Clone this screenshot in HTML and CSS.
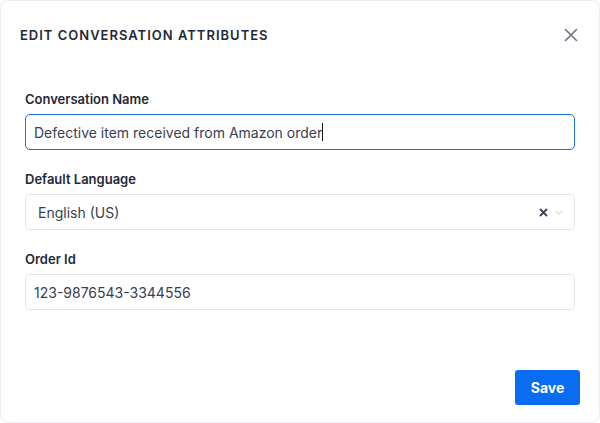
FILE: index.html
```html
<!DOCTYPE html>
<html>
<head>
<meta charset="utf-8">
<link rel="stylesheet" href="styles.css">
</head>
<body>
<div class="modal">
  <div class="header">
    <h2 class="title">EDIT CONVERSATION ATTRIBUTES</h2>
    <button class="close" aria-label="Close">
      <svg width="14" height="14" viewBox="0 0 14 14"><path d="M1.5 1.5 L12.5 12.5 M12.5 1.5 L1.5 12.5" stroke="#6b7280" stroke-width="1.6" stroke-linecap="round"/></svg>
    </button>
  </div>
  <div class="body">
    <div class="field">
      <label class="label">Conversation Name</label>
      <div class="input focused">Defective item received from Amazon order<span class="caret"></span></div>
    </div>
    <div class="field">
      <label class="label">Default Language</label>
      <div class="input select">
        <span class="select-value">English (US)</span>
        <span class="clear">
          <svg width="9" height="9" viewBox="0 0 9 9"><path d="M1.5 1.5 L7.5 7.5 M7.5 1.5 L1.5 7.5" stroke="#374151" stroke-width="1.8" stroke-linecap="round"/></svg>
        </span>
        <span class="chev">
          <svg width="8" height="5" viewBox="0 0 8 5"><path d="M1 1 L4 4 L7 1" stroke="#c4c8cf" stroke-width="1" fill="none"/></svg>
        </span>
      </div>
    </div>
    <div class="field">
      <label class="label">Order Id</label>
      <div class="input">123-9876543-3344556</div>
    </div>
  </div>
  <div class="footer">
    <button class="save">Save</button>
  </div>
</div>
</body>
</html>
```
FILE: styles.css
```css
* { box-sizing: border-box; }
html, body { margin: 0; padding: 0; background: #ffffff; }
body { font-family: Inter, "Noto Sans", sans-serif; color: #1f2937; }
.modal {
  width: 600px;
  height: 423px;
  background: #fff;
  border: 1px solid #eceef1;
  border-radius: 8px;
  display: flex;
  flex-direction: column;
}
.header {
  display: flex;
  align-items: center;
  justify-content: space-between;
  padding: 17px 21px 0 19px;
  height: 50px;
}
.title {
  margin: 0;
  font-size: 13px;
  font-weight: 600;
  letter-spacing: 1px;
  color: #1f2937;
}
.close {
  border: 0;
  background: none;
  padding: 0;
  width: 14px;
  height: 14px;
  display: flex;
}
.body {
  padding: 40px 24px 0 24px;
  display: flex;
  flex-direction: column;
  gap: 21px;
}
.field { display: flex; flex-direction: column; }
.label {
  font-size: 13px;
  font-weight: 600;
  color: #1f2937;
  line-height: 16px;
  margin-bottom: 7px;
}
.input {
  height: 36px;
  border: 1px solid #dfe2e7;
  border-radius: 5px;
  padding: 0 8px;
  font-size: 14px;
  color: #374151;
  display: flex;
  align-items: center;
}
.input.focused {
  border-color: #1f6fe5;
  color: #374151;
}
.caret {
  display: inline-block;
  width: 1px;
  height: 18px;
  background: #111;
}
.select { padding-left: 12px; }
.select-value { flex: 1; }
.clear { display: flex; margin-right: 7px; }
.chev { display: flex; margin-right: 3px; }
.footer {
  margin-top: auto;
  display: flex;
  justify-content: flex-end;
  padding: 0 19px 17px 0;
}
.save {
  width: 65px;
  height: 35px;
  border: 0;
  border-radius: 3px;
  background: #0a6cf0;
  color: #fff;
  font-family: Inter, "Noto Sans", sans-serif;
  font-size: 14px;
  font-weight: 700;
}
```
